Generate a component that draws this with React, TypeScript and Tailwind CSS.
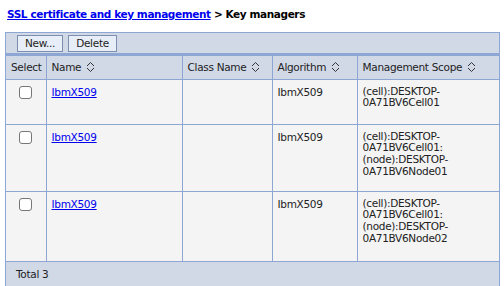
import React from 'react'

const SortIcon = () => (
  <svg width="9" height="12" viewBox="0 0 9 12" className="inline-block ml-[5px] align-[-2px]">
    <path d="M1 5 L4.5 1.5 L8 5" fill="none" stroke="#333" strokeWidth="1" />
    <path d="M1 7 L4.5 10.5 L8 7" fill="none" stroke="#333" strokeWidth="1" />
  </svg>
)

const rows = [
  { name: 'IbmX509', algo: 'IbmX509', scope: ['(cell):DESKTOP-', '0A71BV6Cell01'], h: 'h-[45px]' },
  { name: 'IbmX509', algo: 'IbmX509', scope: ['(cell):DESKTOP-', '0A71BV6Cell01:', '(node):DESKTOP-', '0A71BV6Node01'], h: 'h-[67px]' },
  { name: 'IbmX509', algo: 'IbmX509', scope: ['(cell):DESKTOP-', '0A71BV6Cell01:', '(node):DESKTOP-', '0A71BV6Node02'], h: 'h-[70px]' },
]

export default function App() {
  return (
    <div className="w-[504px] h-[286px] bg-white overflow-hidden font-['DejaVu_Sans',sans-serif] text-[10.5px] tracking-[-0.3px] text-[#222]">
      <div className="px-[7px] pt-[7px] h-[32px] font-bold text-black text-[10.5px] tracking-[-0.4px]">
        <a className="text-[#0000ee] underline">SSL certificate and key management</a> &gt; Key managers
      </div>
      <div className="mx-[5px] w-[495px] border border-[#8ea6d4]">
        <div className="h-[23px] bg-[#d1d9e7] border-b-[3px] border-[#8ea6d4] flex items-center gap-[5px] pl-[11px]">
          <button className="h-[17px] px-[7px] bg-[#e8eef7] border border-[#7d8fb0] leading-none">New...</button>
          <button className="h-[17px] px-[7px] bg-[#e8eef7] border border-[#7d8fb0] leading-none">Delete</button>
        </div>
        <table className="w-full border-collapse table-fixed">
          <colgroup>
            <col className="w-[40px]" />
            <col className="w-[136px]" />
            <col className="w-[90px]" />
            <col className="w-[85px]" />
            <col />
          </colgroup>
          <thead>
            <tr className="h-[23px] bg-[#d1d9e7] text-left">
              <th className="font-normal px-[5px] pt-[2px] border-r border-[#8ea6d4]">Select</th>
              <th className="font-normal px-[5px] pt-[2px] border-r border-[#8ea6d4]">Name<SortIcon /></th>
              <th className="font-normal px-[5px] pt-[2px] border-r border-[#8ea6d4]">Class Name<SortIcon /></th>
              <th className="font-normal px-[5px] pt-[2px] border-r border-[#8ea6d4]">Algorithm<SortIcon /></th>
              <th className="font-normal px-[5px] pt-[2px]">Management Scope<SortIcon /></th>
            </tr>
          </thead>
          <tbody>
            {rows.map((r, i) => (
              <tr key={i} className={`${r.h} bg-[#f4f4f4] align-top border-t border-[#8ea6d4]`}>
                <td className="border-r border-[#8ea6d4] text-center pt-[6px]">
                  <span className="inline-block w-[13px] h-[13px] border border-[#767676] rounded-[3px] bg-white" />
                </td>
                <td className="border-r border-[#8ea6d4] px-[5px] pt-[6px] leading-[12px]">
                  <a className="text-[#0000ee] underline">{r.name}</a>
                </td>
                <td className="border-r border-[#8ea6d4]" />
                <td className="border-r border-[#8ea6d4] px-[5px] pt-[6px] leading-[12px]">{r.algo}</td>
                <td className="px-[5px] pt-[6px] leading-[11.7px]">
                  {r.scope.map((s) => <div key={s}>{s}</div>)}
                </td>
              </tr>
            ))}
          </tbody>
        </table>
        <div className="h-[26px] bg-[#d1d9e7] border-t border-[#8ea6d4] flex items-center pl-[10px]">Total 3</div>
      </div>
    </div>
  )
}
